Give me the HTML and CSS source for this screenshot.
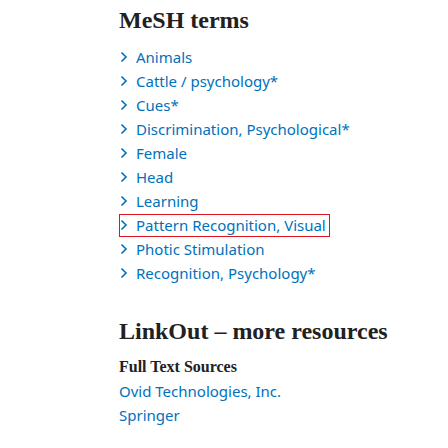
FILE: index.html
```html
<!DOCTYPE html>
<html>
<head>
<meta charset="utf-8">
<link rel="stylesheet" href="styles.css">
</head>
<body>
<div class="page">
  <section class="mesh">
    <h2 class="heading">MeSH terms</h2>
    <ul class="terms">
      <li><a class="term"><svg class="chev" viewBox="0 0 8 12"><path d="M1.5 1.5l4.5 4.5-4.5 4.5" /></svg><span>Animals</span></a></li>
      <li><a class="term"><svg class="chev" viewBox="0 0 8 12"><path d="M1.5 1.5l4.5 4.5-4.5 4.5" /></svg><span>Cattle / psychology*</span></a></li>
      <li><a class="term"><svg class="chev" viewBox="0 0 8 12"><path d="M1.5 1.5l4.5 4.5-4.5 4.5" /></svg><span>Cues*</span></a></li>
      <li><a class="term"><svg class="chev" viewBox="0 0 8 12"><path d="M1.5 1.5l4.5 4.5-4.5 4.5" /></svg><span>Discrimination, Psychological*</span></a></li>
      <li><a class="term"><svg class="chev" viewBox="0 0 8 12"><path d="M1.5 1.5l4.5 4.5-4.5 4.5" /></svg><span>Female</span></a></li>
      <li><a class="term"><svg class="chev" viewBox="0 0 8 12"><path d="M1.5 1.5l4.5 4.5-4.5 4.5" /></svg><span>Head</span></a></li>
      <li><a class="term"><svg class="chev" viewBox="0 0 8 12"><path d="M1.5 1.5l4.5 4.5-4.5 4.5" /></svg><span>Learning</span></a></li>
      <li><a class="term active"><svg class="chev" viewBox="0 0 8 12"><path d="M1.5 1.5l4.5 4.5-4.5 4.5" /></svg><span>Pattern Recognition, Visual</span></a></li>
      <li><a class="term"><svg class="chev" viewBox="0 0 8 12"><path d="M1.5 1.5l4.5 4.5-4.5 4.5" /></svg><span>Photic Stimulation</span></a></li>
      <li><a class="term"><svg class="chev" viewBox="0 0 8 12"><path d="M1.5 1.5l4.5 4.5-4.5 4.5" /></svg><span>Recognition, Psychology*</span></a></li>
    </ul>
  </section>
  <section class="linkout">
    <h2 class="heading">LinkOut – more resources</h2>
    <h3 class="subheading">Full Text Sources</h3>
    <ul class="sources">
      <li><a class="source">Ovid Technologies, Inc.</a></li>
      <li><a class="source">Springer</a></li>
    </ul>
  </section>
</div>
</body>
</html>
```
FILE: styles.css
```css
html, body {
  margin: 0;
  padding: 0;
  background: #ffffff;
}
.page {
  padding: 4px 0 0 119px;
  font-family: "Noto Sans", "Open Sans", sans-serif;
}
.heading {
  font-family: "Liberation Serif", serif;
  font-weight: bold;
  font-size: 24px;
  line-height: 32px;
  color: #212121;
  margin: 0;
}
.terms, .sources {
  list-style: none;
  margin: 0;
  padding: 0;
}
.terms {
  margin-top: 9px;
}
.terms li {
  height: 24px;
  display: flex;
  align-items: center;
}
.term {
  display: inline-flex;
  align-items: center;
  height: 21px;
  padding: 0 3px 0 0;
  border: 1px solid transparent;
  color: #0071bc;
  font-size: 15px;
  gap: 8px;
  cursor: pointer;
}
.term.active {
  border-color: #e0141e;
}
.chev {
  flex: 0 0 auto;
  display: block;
  width: 8px;
  height: 12px;
  fill: none;
  stroke: #0071bc;
  stroke-width: 1.6;
  margin-left: 0;
}
.linkout {
  margin-top: 30px;
}
.subheading {
  font-family: "Liberation Serif", serif;
  font-weight: bold;
  font-size: 16px;
  line-height: 20px;
  color: #212121;
  margin: 10px 0 2px;
}
.sources li {
  height: 24px;
  display: flex;
  align-items: center;
}
.source {
  color: #0071bc;
  font-size: 15px;
  cursor: pointer;
}
```
